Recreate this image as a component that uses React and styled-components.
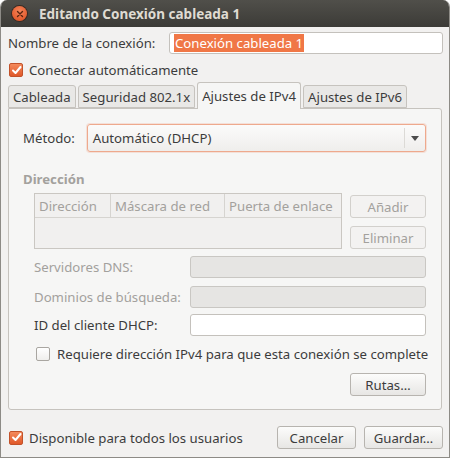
import React from 'react';
import styled, { createGlobalStyle } from 'styled-components';

const GlobalStyle = createGlobalStyle`
  html, body {
    margin: 0;
    padding: 0;
    background: #ffffff;
  }
  * {
    box-sizing: border-box;
  }
`;

export default function App () {
  return (
    <>
      <GlobalStyle />
      <Window>
        <TitleBar>
          <CloseButton>
            <svg width="8" height="8" viewBox="0 0 8 8">
              <path d="M1.5 1.5 L6.5 6.5 M6.5 1.5 L1.5 6.5" stroke="#5a2410" strokeWidth="1.4" strokeLinecap="round" />
            </svg>
          </CloseButton>
          <Title>Editando Conexión cableada 1</Title>
        </TitleBar>

        <Content>
          <NameRow>
            <Label>Nombre de la conexión:</Label>
            <TextBox>
              <Selected>Conexión cableada 1</Selected>
            </TextBox>
          </NameRow>

          <CheckRow>
            <CheckBox checked />
            <Label>Conectar automáticamente</Label>
          </CheckRow>

          <Tabs>
            <Tab>Cableada</Tab>
            <Tab>Seguridad 802.1x</Tab>
            <Tab active>Ajustes de IPv4</Tab>
            <Tab>Ajustes de IPv6</Tab>
          </Tabs>

          <Panel>
            <MethodRow>
              <Label>Método:</Label>
              <Combo>
                <ComboText>Automático (DHCP)</ComboText>
                <ComboArrow>
                  <svg width="8" height="5" viewBox="0 0 8 5">
                    <path d="M0 0 L8 0 L4 5 Z" fill="#4c4c4c" />
                  </svg>
                </ComboArrow>
              </Combo>
            </MethodRow>

            <SectionTitle>Dirección</SectionTitle>

            <AddressBlock>
              <Table>
                <TableHead>
                  <HeadCell width={76}>Dirección</HeadCell>
                  <HeadCell width={114}>Máscara de red</HeadCell>
                  <HeadCell last>Puerta de enlace</HeadCell>
                </TableHead>
              </Table>
              <SideButtons>
                <Button disabled>Añadir</Button>
                <Button disabled>Eliminar</Button>
              </SideButtons>
            </AddressBlock>

            <FieldRow top={7}>
              <FieldLabel disabled>Servidores DNS:</FieldLabel>
              <Field disabled />
            </FieldRow>
            <FieldRow top={8}>
              <FieldLabel disabled>Dominios de búsqueda:</FieldLabel>
              <Field disabled />
            </FieldRow>
            <FieldRow top={6}>
              <FieldLabel>ID del cliente DHCP:</FieldLabel>
              <Field />
            </FieldRow>

            <RequireRow>
              <CheckBox />
              <Label>Requiere dirección IPv4 para que esta conexión se complete</Label>
            </RequireRow>

            <RoutesRow>
              <Button>Rutas…</Button>
            </RoutesRow>
          </Panel>

          <Footer>
            <CheckRow>
              <CheckBox checked />
              <Label>Disponible para todos los usuarios</Label>
            </CheckRow>
            <FooterButtons>
              <Button wide>Cancelar</Button>
              <Button wide>Guardar…</Button>
            </FooterButtons>
          </Footer>
        </Content>
      </Window>
    </>
  );
}

function CheckBox ({ checked }) {
  return (
    <Box checked={checked}>
      {checked && (
        <svg width="11" height="11" viewBox="0 0 11 11">
          <path d="M2 5.5 L4.5 8 L9.5 2" fill="none" stroke="#ffffff" strokeWidth="2" strokeLinecap="round" strokeLinejoin="round" />
        </svg>
      )}
    </Box>
  );
}

const Window = styled.div`
  width: 450px;
  height: 458px;
  display: flex;
  flex-direction: column;
  background: #f2f1f0;
  border: 1px solid #8d8b86;
  border-top: none;
  border-radius: 7px 7px 0 0;
  overflow: hidden;
  font-family: "Noto Sans", "DejaVu Sans", sans-serif;
  font-size: 13.2px;
  color: #3c3c3c;
`;

const TitleBar = styled.div`
  height: 27px;
  flex-shrink: 0;
  display: flex;
  align-items: center;
  padding-left: 11px;
  background: linear-gradient(#504f4a, #3c3b37);
`;

const CloseButton = styled.div`
  width: 15px;
  height: 15px;
  border-radius: 50%;
  background: radial-gradient(circle at 50% 35%, #f5855a, #dd4a1c);
  box-shadow: 0 0 0 1px #3a2a22;
  display: flex;
  align-items: center;
  justify-content: center;
`;

const Title = styled.div`
  margin-left: 12px;
  font-weight: bold;
  font-size: 13.5px;
  color: #dfdbd2;
`;

const Content = styled.div`
  flex: 1;
  display: flex;
  flex-direction: column;
  padding: 5px 6px 7px 6px;
`;

const Label = styled.span`
  white-space: nowrap;
  color: ${props => props.disabled ? '#a3a19d' : '#3c3c3c'};
`;

const NameRow = styled.div`
  display: flex;
  align-items: center;
  justify-content: space-between;
  height: 22px;
  padding-left: 1px;
`;

const TextBox = styled.div`
  width: 274px;
  height: 22px;
  border: 1px solid #c4c1bc;
  border-radius: 3px;
  background: #ffffff;
  display: flex;
  align-items: center;
  padding-left: 4px;
`;

const Selected = styled.span`
  background: #f07746;
  color: #ffffff;
  padding: 0 1px;
  line-height: 18px;
`;

const CheckRow = styled.div`
  display: flex;
  align-items: center;
  gap: 6px;
  margin-top: 5px;
  padding-left: 2px;
  height: 22px;
`;

const Box = styled.div`
  width: 14px;
  height: 14px;
  flex-shrink: 0;
  border-radius: 2px;
  display: flex;
  align-items: center;
  justify-content: center;
  border: 1px solid ${props => props.checked ? '#c2522a' : '#a9a6a1'};
  background: ${props => props.checked
    ? 'linear-gradient(#f48a5c, #e0592a)'
    : 'linear-gradient(#ffffff, #efeeec)'};
`;

const Tabs = styled.div`
  display: flex;
  align-items: flex-end;
  gap: 2px;
  height: 27px;
  padding-left: 1px;
  position: relative;
  z-index: 1;
`;

const Tab = styled.div`
  height: ${props => props.active ? '27px' : '23px'};
  padding: 0 4px;
  display: flex;
  align-items: center;
  padding-top: ${props => props.active ? '0' : '1px'};
  border: 1px solid #c6c3be;
  border-bottom: ${props => props.active ? 'none' : '1px solid #c6c3be'};
  border-radius: 3px 3px 0 0;
  background: ${props => props.active ? '#f6f6f5' : '#e9e8e6'};
  margin-bottom: ${props => props.active ? '-1px' : '0'};
  color: #3c3c3c;
  white-space: nowrap;
`;

const Panel = styled.div`
  flex: 1;
  display: flex;
  flex-direction: column;
  margin: 0 1px;
  padding: 15px 15px 0 14px;
  border: 1px solid #c6c3be;
  border-radius: 0 3px 3px 3px;
  background: #f6f6f5;
`;

const MethodRow = styled.div`
  display: flex;
  align-items: center;
  gap: 12px;
  height: 28px;
`;

const Combo = styled.div`
  flex: 1;
  height: 28px;
  display: flex;
  align-items: center;
  border: 1px solid #eea98d;
  border-radius: 3px;
  background: linear-gradient(#fbfbfa, #efeeec);
  box-shadow: 0 0 0 1px rgba(240, 160, 130, 0.25);
`;

const ComboText = styled.span`
  flex: 1;
  padding-left: 5px;
`;

const ComboArrow = styled.div`
  width: 21px;
  height: 20px;
  border-left: 1px solid #dcdad6;
  display: flex;
  align-items: center;
  justify-content: center;
`;

const SectionTitle = styled.div`
  margin-top: 18px;
  font-weight: bold;
  color: #a3a19d;
  line-height: 18px;
`;

const AddressBlock = styled.div`
  display: flex;
  gap: 8px;
  margin-top: 5px;
  padding-left: 11px;
`;

const Table = styled.div`
  width: 311px;
  height: 56px;
  border: 1px solid #cac7c2;
  background: #f1f0ef;
`;

const TableHead = styled.div`
  display: flex;
  height: 24px;
  border-bottom: 1px solid #d6d4d0;
`;

const HeadCell = styled.div`
  width: ${props => props.width ? `${props.width}px` : 'auto'};
  flex: ${props => props.last ? '1' : 'none'};
  padding-left: 4px;
  display: flex;
  align-items: center;
  color: #a3a19d;
  white-space: nowrap;
  border-right: ${props => props.last ? 'none' : '1px solid #d6d4d0'};
`;

const SideButtons = styled.div`
  display: flex;
  flex-direction: column;
  gap: 8px;
  padding-top: 2px;
`;

const Button = styled.div`
  width: ${props => props.wide ? '79px' : '76px'};
  height: 23px;
  display: flex;
  align-items: center;
  justify-content: center;
  border: 1px solid ${props => props.disabled ? '#d2d0cc' : '#b7b4af'};
  border-radius: 3px;
  background: ${props => props.disabled
    ? '#f3f2f1'
    : 'linear-gradient(#fcfcfb, #e7e6e4)'};
  color: ${props => props.disabled ? '#a3a19d' : '#3c3c3c'};
  white-space: nowrap;
`;

const FieldRow = styled.div`
  display: flex;
  align-items: center;
  justify-content: space-between;
  margin-top: ${props => props.top}px;
  padding-left: 11px;
  height: 22px;
`;

const FieldLabel = styled(Label)``;

const Field = styled.div`
  width: 236px;
  height: 22px;
  border: 1px solid ${props => props.disabled ? '#c9c7c3' : '#c4c1bc'};
  border-radius: 3px;
  background: ${props => props.disabled ? '#e6e5e3' : '#ffffff'};
`;

const RequireRow = styled.div`
  display: flex;
  align-items: center;
  gap: 7px;
  margin-top: 7px;
  padding-left: 13px;
  height: 22px;
`;

const RoutesRow = styled.div`
  display: flex;
  justify-content: flex-end;
  margin-top: 8px;
`;

const Footer = styled.div`
  display: flex;
  align-items: center;
  justify-content: space-between;
  margin-top: 16px;
  padding-bottom: 1px;

  ${CheckRow} {
    margin-top: 0;
  }
`;

const FooterButtons = styled.div`
  display: flex;
  gap: 8px;
`;
